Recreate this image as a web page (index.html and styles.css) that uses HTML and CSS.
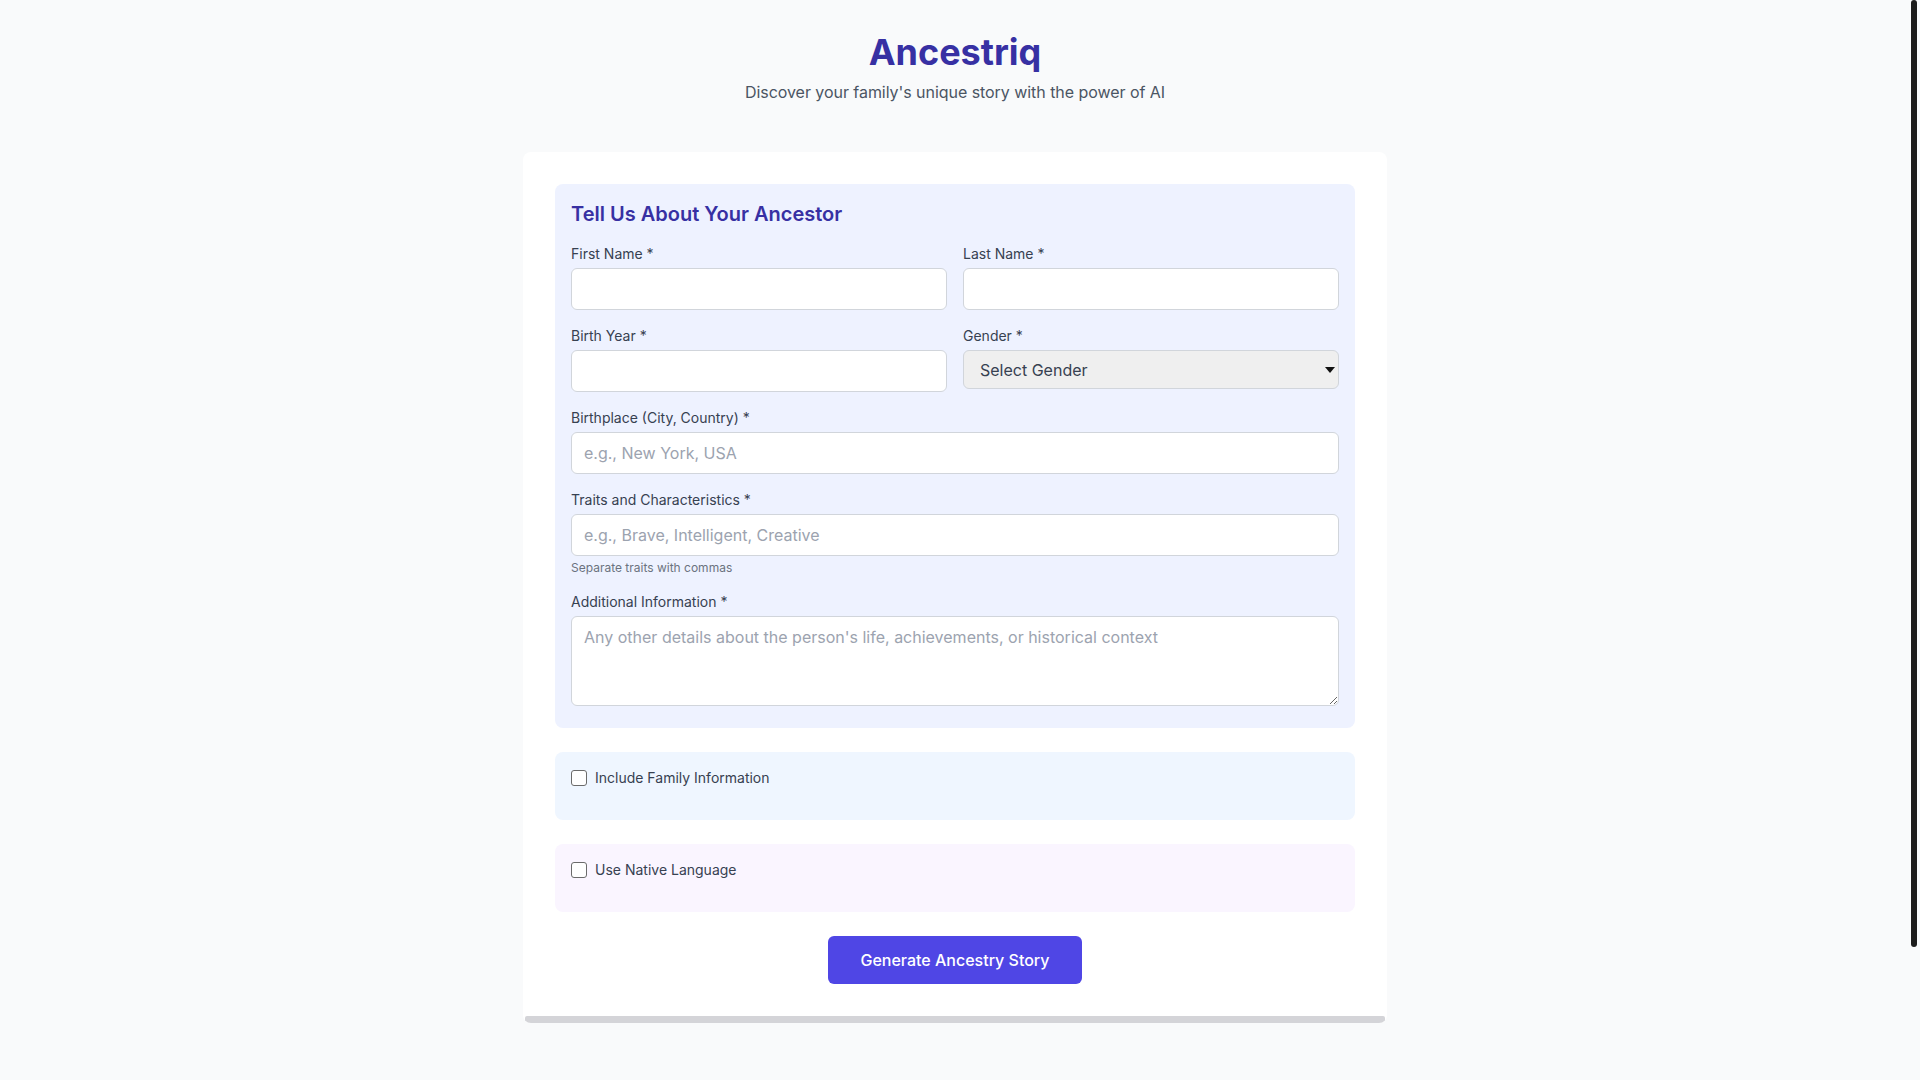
FILE: index.html
```html
<!DOCTYPE html>
<html lang="en">
<head>
<meta charset="utf-8">
<title>Ancestriq</title>
<link rel="stylesheet" href="styles.css">
</head>
<body>
<div class="page">
  <div class="container">
    <header class="header">
      <h1 class="title">Ancestriq</h1>
      <p class="subtitle">Discover your family's unique story with the power of AI</p>
    </header>
    <div class="card">
      <form class="form">
        <section class="panel panel-main">
          <h2 class="panel-title">Tell Us About Your Ancestor</h2>
          <div class="fields">
            <div class="row">
              <div>
                <label class="label">First Name *</label>
                <input class="input" type="text">
              </div>
              <div>
                <label class="label">Last Name *</label>
                <input class="input" type="text">
              </div>
            </div>
            <div class="row">
              <div>
                <label class="label">Birth Year *</label>
                <input class="input" type="text">
              </div>
              <div>
                <label class="label">Gender *</label>
                <select class="select">
                  <option>Select Gender</option>
                </select>
              </div>
            </div>
            <div>
              <label class="label">Birthplace (City, Country) *</label>
              <input class="input" type="text" placeholder="e.g., New York, USA">
            </div>
            <div>
              <label class="label">Traits and Characteristics *</label>
              <input class="input" type="text" placeholder="e.g., Brave, Intelligent, Creative">
              <p class="hint">Separate traits with commas</p>
            </div>
            <div>
              <label class="label">Additional Information *</label>
              <textarea class="textarea" rows="3" placeholder="Any other details about the person's life, achievements, or historical context"></textarea>
            </div>
          </div>
        </section>
        <section class="panel panel-check panel-family">
          <label class="check-row"><input type="checkbox" class="checkbox"><span class="check-label">Include Family Information</span></label>
        </section>
        <section class="panel panel-check panel-native">
          <label class="check-row"><input type="checkbox" class="checkbox"><span class="check-label">Use Native Language</span></label>
        </section>
        <div class="actions">
          <button type="button" class="button">Generate Ancestry Story</button>
        </div>
      </form>
      <div class="card-bar"></div>
    </div>
  </div>
</div>
<div class="scroll-thumb"></div>
</body>
</html>
```

FILE: styles.css
```css
* { box-sizing: border-box; }
html, body { margin: 0; height: 100%; overflow: hidden; }
body {
  background: #f9fafb;
  font-family: Inter, "Noto Sans", sans-serif;
  color: #111827;
  padding-right: 10px;
}
.page { padding: 32px 0; }
.container { max-width: 896px; margin: 0 auto; padding: 0 16px; }
.header { text-align: center; margin-bottom: 48px; }
.title {
  font-size: 36px; line-height: 40px; font-weight: 700;
  color: #3730a3; margin: 0 0 8px;
}
.subtitle { font-size: 16px; line-height: 24px; color: #4b5563; margin: 0; letter-spacing: -0.05px; }
.card {
  background: #fff; border-radius: 8px; overflow: hidden;
  padding: 32px 32px 0;
}
.form { display: flex; flex-direction: column; gap: 24px; }
.panel { border-radius: 8px; padding: 16px; }
.panel-main { background: #eef2ff; }
.panel-title {
  font-size: 20px; line-height: 28px; font-weight: 600;
  color: #3730a3; margin: 0 0 16px;
}
.fields { display: flex; flex-direction: column; gap: 16px; }
.row { display: grid; grid-template-columns: 1fr 1fr; gap: 16px; }
.label {
  display: block; font-size: 14px; line-height: 20px; font-weight: 400;
  color: #374151; margin-bottom: 4px;
}
.input, .textarea {
  display: block; width: 100%; padding: 8px 12px;
  border: 1px solid #d1d5db; border-radius: 6px; background: #fff;
  font-family: inherit; font-size: 16px; line-height: 24px; color: #111827;
  margin: 0;
}
.input { height: 42px; }
.textarea { height: 90px; margin-bottom: 6px; resize: vertical; }
.input::placeholder, .textarea::placeholder { color: #9ca3af; }
.select {
  display: block; width: 100%; height: 39px; margin: 1px 0 0;
  padding: 0 28px 0 16px;
  border: 1px solid #d1d5db; border-radius: 6px;
  background-color: #efefef;
  background-image: url("data:image/svg+xml;utf8,<svg xmlns='http://www.w3.org/2000/svg' width='10' height='6' viewBox='0 0 10 6'><polygon points='0,0 10,0 5,6' fill='%23111'/></svg>");
  background-repeat: no-repeat; background-position: right 3px center;
  background-size: 10px 6px;
  -webkit-appearance: none; appearance: none;
  font-family: inherit; font-size: 16px; color: #374151;
}
.hint { font-size: 12px; line-height: 16px; color: #6b7280; margin: 4px 0 0; }
.panel-check { padding: 16px 16px 32px; }
.panel-family { background: #eff6ff; }
.panel-native { background: #faf5ff; }
.check-row { display: flex; align-items: center; }
.checkbox {
  -webkit-appearance: none; appearance: none;
  width: 16px; height: 16px; margin: 0;
  border: 1px solid #6b6b6b; border-radius: 3px; background: #fff;
}
.check-label {
  margin-left: 8px; font-size: 14px; line-height: 20px; font-weight: 400;
  color: #374151;
}
.actions { text-align: center; }
.button {
  padding: 12px 32px; border: none; border-radius: 6px;
  background: #4f46e5; color: #fff;
  font-family: inherit; font-size: 16px; line-height: 24px; font-weight: 500;
}
.card-bar { height: 7px; margin: 32px -30px 0; background: #d4d4d8; border-radius: 2px; }
.scroll-thumb {
  position: fixed; top: 0; right: 3px; width: 6px; height: 947px;
  background: #1c1c1c; border-radius: 3px;
}
```
